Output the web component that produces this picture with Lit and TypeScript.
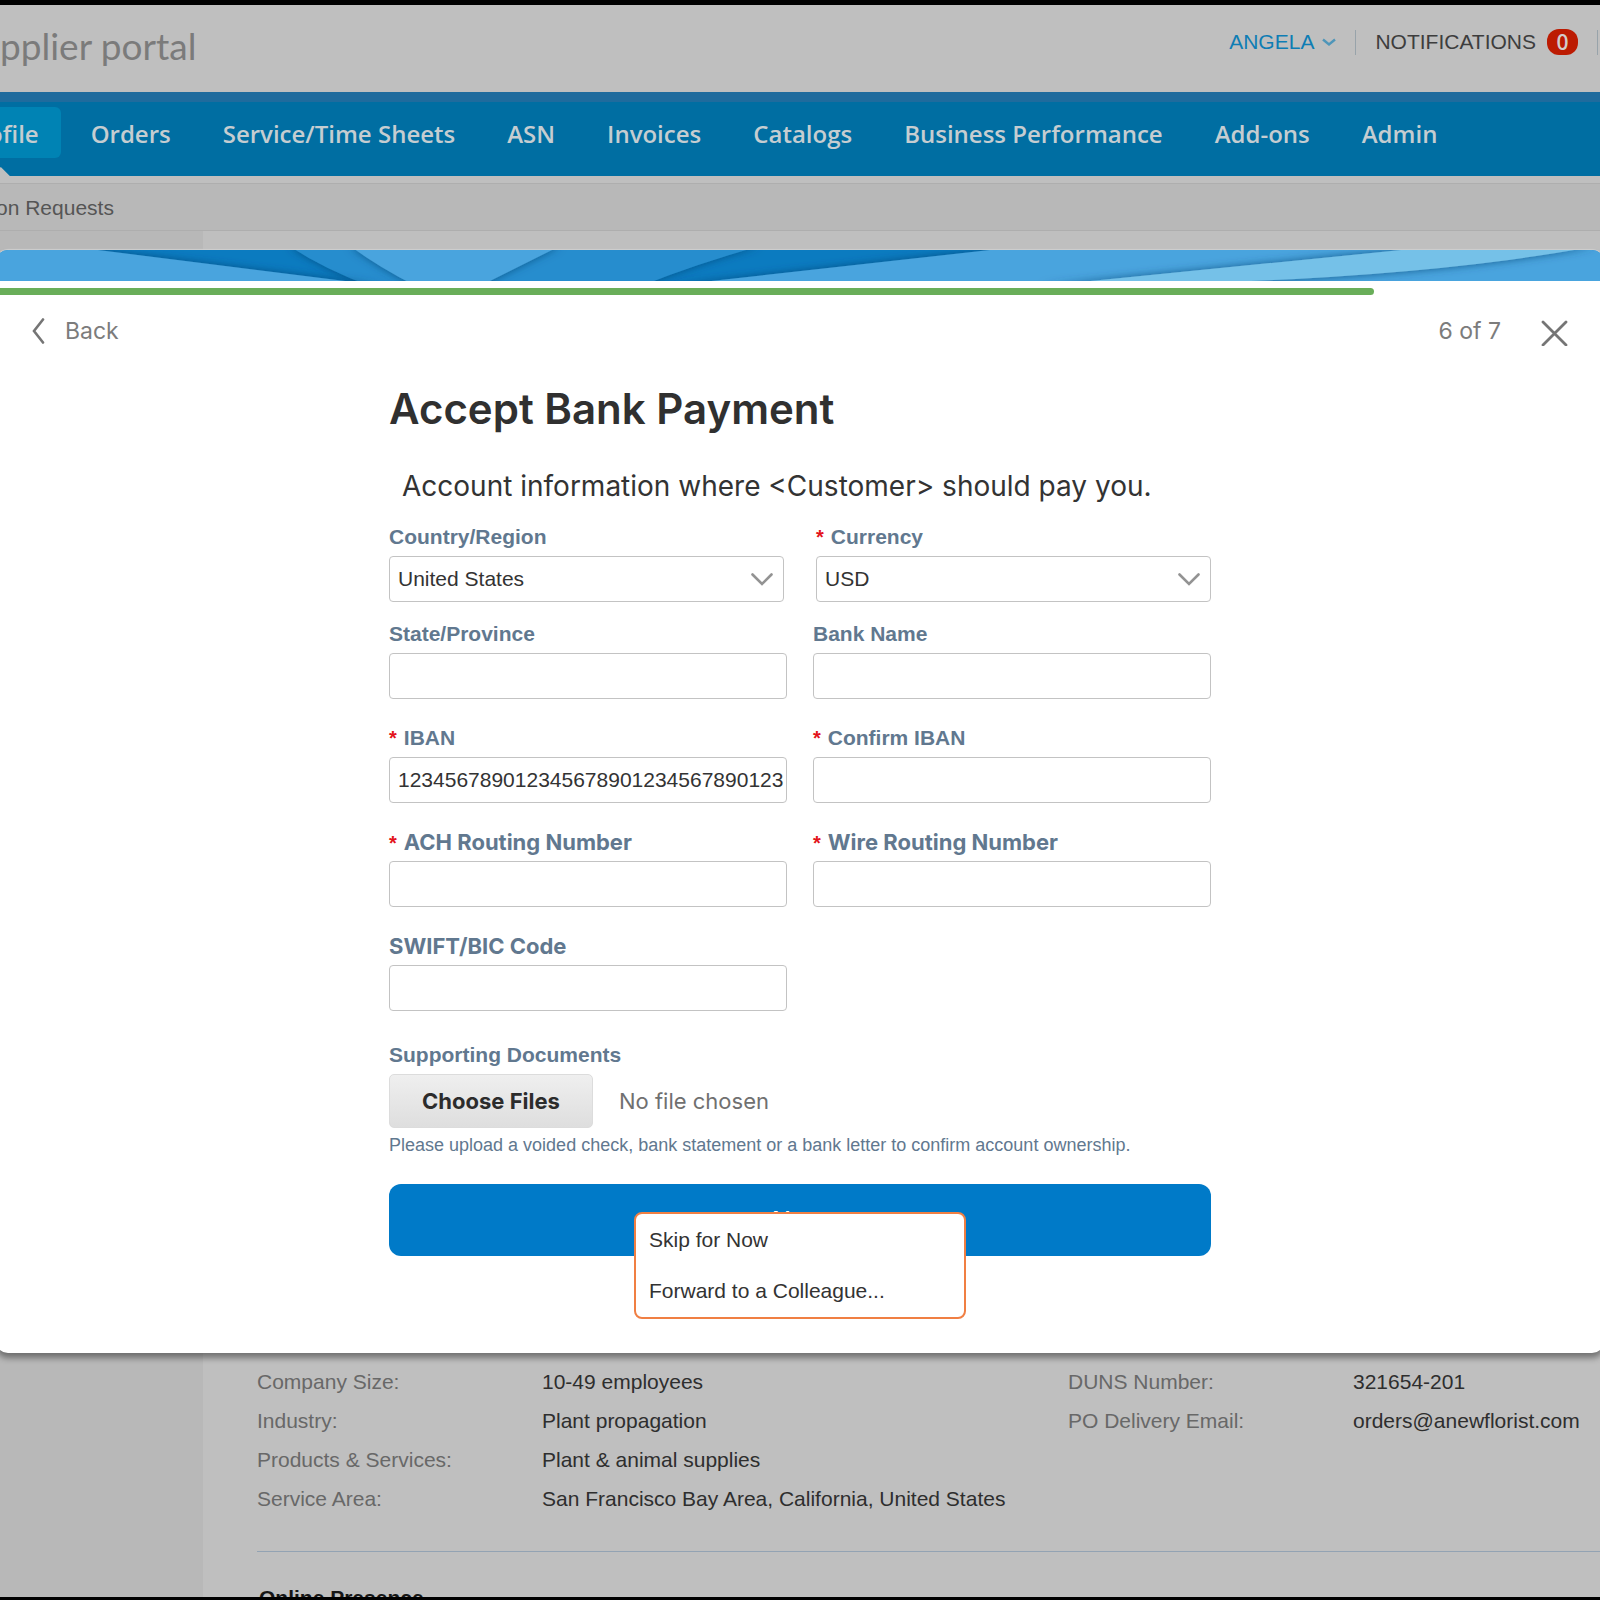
import { LitElement, html, css, svg, nothing } from "lit";
import { customElement, query, state } from "lit/decorators.js";
import { classMap } from "lit/directives/class-map.js";

interface Field {
  id: string;
  label: string;
  required?: boolean;
  heavy?: boolean;
  value?: string;
  options?: string[];
}

const CHOICES: Field[] = [
  { id: "country", label: "Country/Region", options: ["United States", "Canada", "Germany"] },
  { id: "currency", label: "Currency", required: true, options: ["USD", "CAD", "EUR"] },
];

const FIELDS: Field[] = [
  { id: "state", label: "State/Province" },
  { id: "bank", label: "Bank Name" },
  { id: "iban", label: "IBAN", required: true, value: "123456789012345678901234567890123" },
  { id: "iban2", label: "Confirm IBAN", required: true },
  { id: "ach", label: "ACH Routing Number", required: true, heavy: true },
  { id: "wire", label: "Wire Routing Number", required: true, heavy: true },
  { id: "swift", label: "SWIFT/BIC Code", heavy: true },
];

const TABS = [
  "Profile",
  "Orders",
  "Service/Time Sheets",
  "ASN",
  "Invoices",
  "Catalogs",
  "Business Performance",
  "Add-ons",
  "Admin",
];

const FACTS_LEFT = [
  ["Company Size:", "10-49 employees"],
  ["Industry:", "Plant propagation"],
  ["Products & Services:", "Plant & animal supplies"],
  ["Service Area:", "San Francisco Bay Area, California, United States"],
];

const FACTS_RIGHT = [
  ["DUNS Number:", "321654-201"],
  ["PO Delivery Email:", "orders@anewflorist.com"],
];

@customElement("portal-page")
export class PortalPage extends LitElement {
  static styles = css`
    :host {
      display: flex;
      flex-direction: column;
      min-width: 0;
      overflow: hidden;
      background: #bfbfbf;
      color: #2e2e2e;
      font: 21px/26px "Liberation Sans", Arial, sans-serif;
    }
    a {
      color: inherit;
      text-decoration: none;
    }
    .header {
      display: flex;
      justify-content: space-between;
      align-items: flex-start;
      height: 87px;
    }
    .brand {
      padding-top: 16px;
      color: #7b7b7b;
      font: 37px/50px Lato, sans-serif;
      white-space: nowrap;
    }
    .account {
      display: flex;
      align-items: center;
      gap: 19px;
      padding: 24px 2px 0 0;
    }
    .user {
      display: flex;
      align-items: center;
      gap: 8px;
      padding: 0;
      border: 0;
      background: none;
      color: #0e7db4;
      font: inherit;
    }
    .alerts {
      display: flex;
      align-items: center;
      gap: 11px;
      color: #3d3d3d;
    }
    .badge {
      min-width: 31px;
      border-radius: 12px;
      background: #bc1b02;
      color: #d2cccc;
      font: 600 21px/26px "Open Sans", sans-serif;
      text-align: center;
    }
    .divider {
      width: 1px;
      height: 25px;
      background: #98a3aa;
    }
    .nav {
      height: 69px;
      padding: 5px 0 0;
      border-top: 10px solid #1f6b9d;
      background: #006ea2;
      color: #c5cdd1;
      font: 600 24px/53px "Open Sans", sans-serif;
      white-space: nowrap;
    }
    .tabs {
      display: flex;
      gap: 8px;
      margin: 0 0 0 -59px;
      padding: 0;
      list-style: none;
    }
    .tab {
      position: relative;
      height: 51px;
      padding: 0 22px;
      border-radius: 6px;
    }
    .active {
      background: #0083b4;
    }
    .active::after {
      position: absolute;
      top: 60px;
      left: 50%;
      width: 20px;
      height: 10px;
      margin-left: -10px;
      background: #bfbfbf;
      clip-path: polygon(50% 0, 100% 100%, 0 100%);
      content: "";
    }
    .subnav {
      margin-top: 7px;
      padding: 11px 0 9px;
      border-top: 1px solid #aeaeae;
      border-bottom: 1px solid #aeaeae;
      background: #b8b8b8;
      color: #555;
    }
    .subnav a {
      margin-left: -4px;
    }
    .main {
      display: flex;
      flex: 1;
      min-height: 0;
    }
    .side {
      flex: none;
      width: 203px;
      background: #b8b8b8;
    }
    .content {
      display: flex;
      flex: 1;
      flex-direction: column;
      justify-content: flex-end;
      min-width: 0;
      padding-left: 54px;
    }
    .facts {
      display: grid;
      grid-template-columns: 811fr 532fr;
      align-items: start;
      padding-bottom: 33px;
      border-bottom: 1px solid #93a3b3;
    }
    .list {
      display: grid;
      grid-template-columns: 285px 1fr;
      margin: 0;
      line-height: 39px;
      white-space: nowrap;
    }
    .list dt {
      color: #686868;
    }
    .list dd {
      margin: 0;
    }
    .heading {
      height: 12px;
      margin: 0;
      padding: 33px 0 0 2px;
      color: #161616;
      font-size: 21px;
      line-height: 26px;
    }
  `;

  private facts(rows: string[][]) {
    return html`<dl class="list">
      ${rows.map(([name, value]) => html`<dt>${name}</dt><dd>${value}</dd>`)}
    </dl>`;
  }

  render() {
    return html`
      <header class="header">
        <div class="brand">pplier portal</div>
        <div class="account">
          <button class="user" type="button">
            ANGELA
            <svg width="14" height="10" viewBox="0 0 14 10" fill="none" stroke="#4f96b9" stroke-width="2.4" aria-hidden="true">
              <path d="M1 2.5 7 7.5 13 2.5" />
            </svg>
          </button>
          <span class="divider"></span>
          <a class="alerts" href="#notifications">NOTIFICATIONS <span class="badge">0</span></a>
          <span class="divider"></span>
        </div>
      </header>
      <nav class="nav" aria-label="Main">
        <ul class="tabs">
          ${TABS.map(
            (tab, i) => html`<li class=${classMap({ tab: true, active: i === 0 })}><a href="#tab-${i}">${tab}</a></li>`,
          )}
        </ul>
      </nav>
      <div class="subnav"><a href="#requests">on Requests</a></div>
      <div class="main">
        <aside class="side"></aside>
        <section class="content">
          <div class="facts">${this.facts(FACTS_LEFT)}${this.facts(FACTS_RIGHT)}</div>
          <h2 class="heading">Online Presence</h2>
        </section>
      </div>
    `;
  }
}

@customElement("payment-dialog")
export class PaymentDialog extends LitElement {
  static styles = css`
    :host {
      display: block;
      border-radius: 12px;
      background: #fff;
      box-shadow: 0 -1px 1px #cfcfcf, 0 5px 6px rgba(0, 0, 0, 0.4);
      color: #333;
      font: 21px/24px "Liberation Sans", Arial, sans-serif;
    }
    * {
      box-sizing: border-box;
    }
    .banner {
      display: block;
      width: 100%;
      height: 31px;
      border-radius: 12px 12px 0 0;
    }
    .progress {
      display: block;
      width: 1378px;
      max-width: 86%;
      height: 7px;
      margin-top: 7px;
      border-radius: 0 4px 4px 0;
      background: #69ae59;
    }
    .bar {
      display: flex;
      justify-content: space-between;
      align-items: center;
      padding: 20px 36px 0;
      color: #7c7c7c;
      font: 23px/32px Inter, sans-serif;
    }
    .back,
    .close {
      display: flex;
      align-items: center;
      gap: 20px;
      padding: 0;
      border: 0;
      background: none;
      color: inherit;
      font: inherit;
    }
    .close {
      padding-top: 3px;
    }
    .steps {
      display: flex;
      align-items: center;
      gap: 40px;
    }
    .form {
      width: 822px;
      max-width: 90%;
      margin: 0 auto;
      padding: 38px 0 97px;
    }
    .title {
      margin: 0;
      color: #303030;
      font: 600 42px/48px Inter, sans-serif;
      white-space: nowrap;
    }
    .intro {
      margin: 35px 0 21px;
      padding-left: 13px;
      font: 28px/36px Inter, sans-serif;
      white-space: nowrap;
    }
    .grid {
      display: grid;
      grid-template-columns: 1fr 1fr;
      gap: 27px 26px;
    }
    .choices {
      margin-bottom: 20px;
      column-gap: 32px;
    }
    .field {
      display: flex;
      flex-direction: column;
      gap: 7px;
      min-width: 0;
    }
    .label {
      height: 24px;
      color: #61788f;
      font-weight: 700;
      white-space: nowrap;
    }
    .heavy {
      font-size: 22px;
      font-family: Inter, sans-serif;
    }
    .star {
      margin-right: 7px;
      color: #e3131b;
      font-size: 20px;
      font-family: "Liberation Sans", Arial, sans-serif;
      line-height: 20px;
    }
    .box {
      width: 100%;
      height: 46px;
      padding: 0 0 0 8px;
      border: 1px solid #c3c3c3;
      border-radius: 4px;
      outline: 0;
      background: #fff;
      color: #333;
      font: inherit;
      appearance: none;
    }
    .pick {
      display: grid;
      align-items: center;
    }
    .pick > * {
      grid-area: 1 / 1;
    }
    .arrow {
      justify-self: end;
      margin-right: 11px;
      pointer-events: none;
    }
    .upload {
      display: flex;
      flex-direction: column;
      gap: 7px;
      margin: 32px 0 29px;
    }
    .files {
      display: flex;
      align-items: center;
      gap: 26px;
      color: #707070;
      font: 22px/24px Inter, sans-serif;
    }
    .choose {
      width: 204px;
      height: 54px;
      border: 1px solid #dcdcdc;
      border-radius: 5px;
      background: linear-gradient(#efefef, #dedede);
      color: #2c2c2c;
      font: 700 22px/24px Inter, sans-serif;
    }
    .help {
      margin: 0;
      color: #61788f;
      font-size: 18px;
      line-height: 20px;
    }
    .action {
      display: grid;
      position: relative;
    }
    .next {
      height: 72px;
      padding: 1px 0 0;
      border: 0;
      border-radius: 12px;
      background: #007ac8;
      color: #fff;
      font: 500 25px/32px Inter, sans-serif;
    }
    .menu {
      display: grid;
      position: absolute;
      top: 28px;
      left: 50%;
      gap: 1px;
      width: 332px;
      margin: 0 0 0 -166px;
      padding: 1px 0;
      border: 2px solid #f07f43;
      border-radius: 8px;
      background: #fff;
      list-style: none;
    }
    .item {
      width: 100%;
      padding: 13px;
      border: 0;
      background: none;
      color: #333;
      font: inherit;
      text-align: left;
    }
  `;

  @state() private chosen = "No file chosen";
  @query(".picker") private picker!: HTMLInputElement;

  private banner() {
    return html`
      <svg class="banner" viewBox="0 0 1608 31" preserveAspectRatio="none" aria-hidden="true">
        <defs>
          <filter id="fold" x="-5%" y="-100%" width="110%" height="300%">
            <feDropShadow dx="0" dy="0" stdDeviation="4" flood-color="#04406e" flood-opacity="0.7" />
          </filter>
        </defs>
        <rect width="1608" height="31" fill="#0b7bc0" />
        ${[
          ["M293 -4Q330 20 374 36H645Q700 14 764 -4Z", "#258dce"],
          ["M354 -4Q384 18 420 36H484Q524 16 564 -4Z", "#48a4de"],
          ["M-20 -4H70L389 36H-20Z", "#48a4de"],
          ["M1030 -4H1628V36H670Z", "#48a4de"],
          ["M1445 -4L1045 36Q1400 34 1600 -4Z", "#74c1e8"],
        ].map(([d, fill]) => svg`<path d=${d} fill=${fill} filter="url(#fold)" />`)}
      </svg>
    `;
  }

  private field(f: Field) {
    return html`
      <div class="field">
        <label class=${classMap({ label: true, heavy: !!f.heavy })} for=${f.id}
          >${f.required ? html`<span class="star">*</span>` : nothing}${f.label}</label
        >
        ${f.options
          ? html`<div class="pick">
              <select class="box" id=${f.id}>
                ${f.options.map((o) => html`<option>${o}</option>`)}
              </select>
              <svg class="arrow" width="22" height="14" viewBox="0 0 22 14" fill="none" stroke="#939393" stroke-width="2.6" stroke-linecap="round" aria-hidden="true">
                <path d="M1.500 2.500 11 12 20.500 2.500" />
              </svg>
            </div>`
          : html`<input class="box" id=${f.id} type="text" .value=${f.value ?? ""} />`}
      </div>
    `;
  }

  private pickFiles() {
    const count = this.picker.files?.length ?? 0;
    this.chosen = count ? `${count} files` : "No file chosen";
  }

  render() {
    return html`
      ${this.banner()}
      <div class="progress" role="progressbar" aria-label="Setup progress" aria-valuemin="0" aria-valuemax="7" aria-valuenow="6"></div>
      <div class="bar">
        <button class="back" type="button">
          <svg width="13" height="26" viewBox="0 0 13 26" fill="none" stroke="#757575" stroke-width="2.6" stroke-linecap="round" aria-hidden="true">
            <path d="M11 1.500 2 13 11 24.500" />
          </svg>
          Back
        </button>
        <div class="steps">
          6 of 7
          <button class="close" type="button" aria-label="Close">
            <svg width="27" height="27" viewBox="0 0 27 27" fill="none" stroke="#757575" stroke-width="2.8" stroke-linecap="round" aria-hidden="true">
              <path d="M2 3 25 26M25 3 2 26" />
            </svg>
          </button>
        </div>
      </div>
      <form class="form">
        <h1 class="title">Accept Bank Payment</h1>
        <p class="intro">Account information where &lt;Customer&gt; should pay you.</p>
        <div class="grid choices">${CHOICES.map((f) => this.field(f))}</div>
        <div class="grid">${FIELDS.map((f) => this.field(f))}</div>
        <div class="upload">
          <label class="label" for="choose">Supporting Documents</label>
          <div class="files">
            <button class="choose" id="choose" type="button" @click=${() => this.picker.click()}>Choose Files</button>
            <input class="picker" type="file" multiple hidden @change=${this.pickFiles} />
            <span>${this.chosen}</span>
          </div>
          <p class="help">Please upload a voided check, bank statement or a bank letter to confirm account ownership.</p>
        </div>
        <div class="action">
          <button class="next" type="button">Next</button>
          <ul class="menu">
            <li><button class="item" type="button">Skip for Now</button></li>
            <li><button class="item" type="button">Forward to a Colleague...</button></li>
          </ul>
        </div>
      </form>
    `;
  }
}

@customElement("app-root")
export class AppRoot extends LitElement {
  static styles = css`
    :host {
      display: grid;
      box-sizing: border-box;
      min-height: 100vh;
      border-top: 5px solid #000;
      border-bottom: 3px solid #000;
      overflow: hidden;
    }
    .page,
    .overlay {
      grid-area: 1 / 1;
      min-width: 0;
    }
    .overlay {
      z-index: 1;
      margin: 0 -4px;
      padding: 245px 0 244px;
    }
  `;

  render() {
    return html`
      <portal-page class="page"></portal-page>
      <div class="overlay"><payment-dialog></payment-dialog></div>
    `;
  }
}
